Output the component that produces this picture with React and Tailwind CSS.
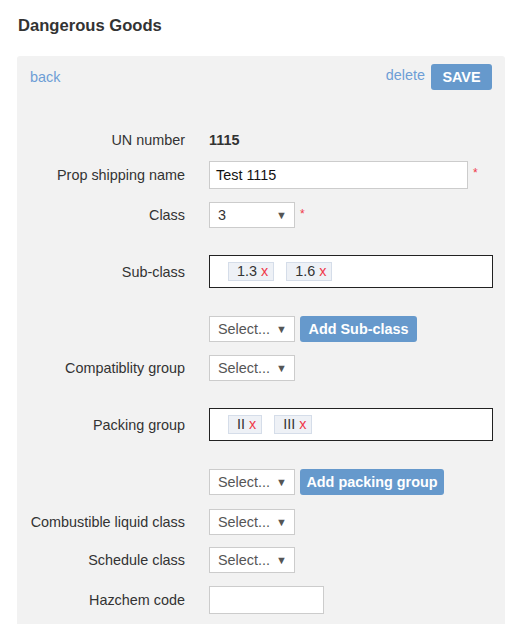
import React from "react";

const font = { fontFamily: '"Liberation Sans", Arial, sans-serif' };

function Label({ children }) {
  return (
    <div className="w-[168px] shrink-0 pt-[2px] text-right text-[14.4px] text-[#333]">{children}</div>
  );
}

function Select({ value, placeholder }) {
  return (
    <div className="flex h-[26px] w-[86px] items-center justify-between border border-[#ccc] bg-white pl-[8px] pr-[7px] pt-[1px] text-[14.4px]">
      <span className={value ? "text-[#333]" : "text-[#555]"}>{value || placeholder}</span>
      <span className="text-[11px] text-[#555]">▼</span>
    </div>
  );
}

function Tag({ text }) {
  return (
    <span className="flex h-[19px] items-center border border-[#d5dde9] bg-[#eef1f6] pl-[8px] pr-[5px] text-[14.4px] leading-none text-[#333]">
      {text}
      <span className="ml-[4px] text-[#f0384a]">x</span>
    </span>
  );
}

function TagBox({ tags }) {
  return (
    <div className="flex h-[33px] w-[284px] items-center gap-[12px] border border-[#222] bg-white pl-[18px]">
      {tags.map((t) => (
        <Tag key={t} text={t} />
      ))}
    </div>
  );
}

function Star() {
  return <span className="ml-[5px] self-start mt-[6px] text-[12px] leading-none text-[#f0384a]">*</span>;
}

function Button({ children, w }) {
  return (
    <button className={`flex h-[26px] items-center justify-center rounded-[3px] bg-[#6699cc] pt-[1px] text-[14.4px] font-bold text-white ${w}`}>
      {children}
    </button>
  );
}

function Row({ label, mt, h, children }) {
  return (
    <div className={`flex items-center ${mt} ${h}`}>
      <Label>{label}</Label>
      <div className="ml-[24px] flex h-full items-center">{children}</div>
    </div>
  );
}

export default function App() {
  return (
    <div className="min-h-[624px] bg-white" style={font}>
      <div className="h-[56px] px-[18px] pt-[16px] text-[16.6px] font-bold leading-[20px] text-[#333]">Dangerous Goods</div>
      <div className="ml-[17px] w-[488px] min-h-[568px] rounded-t-[3px] bg-[#f2f2f2] pb-[10px]">
        <div className="flex items-center justify-between pl-[13px] pr-[13px] pt-[8px]">
          <a className="pt-[1px] text-[14.4px] text-[#6d9ed6]">back</a>
          <div className="flex items-center">
            <a className="mr-[6px] -mt-[3px] text-[14.4px] text-[#6d9ed6]">delete</a>
            <Button w="w-[61px]">SAVE</Button>
          </div>
        </div>

        <Row label="UN number" mt="mt-[37px]" h="h-[26px]">
          <span className="pt-[2px] text-[14.4px] font-bold text-[#333]">1115</span>
        </Row>
        <Row label="Prop shipping name" mt="mt-[8px]" h="h-[28px]">
          <div className="flex h-[28px] w-[259px] items-center border border-[#ccc] bg-white px-[6px] pt-[1px] text-[14.4px] text-[#111]">
            Test 1115
          </div>
          <Star />
        </Row>
        <Row label="Class" mt="mt-[13px]" h="h-[26px]">
          <Select value="3" />
          <Star />
        </Row>
        <Row label="Sub-class" mt="mt-[27px]" h="h-[33px]">
          <TagBox tags={["1.3", "1.6"]} />
        </Row>
        <Row label="" mt="mt-[28px]" h="h-[26px]">
          <Select placeholder="Select..." />
          <div className="ml-[5px]">
            <Button w="w-[117px]">Add Sub-class</Button>
          </div>
        </Row>
        <Row label="Compatiblity group" mt="mt-[13px]" h="h-[26px]">
          <Select placeholder="Select..." />
        </Row>
        <Row label="Packing group" mt="mt-[27px]" h="h-[33px]">
          <TagBox tags={["II", "III"]} />
        </Row>
        <Row label="" mt="mt-[28px]" h="h-[26px]">
          <Select placeholder="Select..." />
          <div className="ml-[5px]">
            <Button w="w-[144px]">Add packing group</Button>
          </div>
        </Row>
        <Row label="Combustible liquid class" mt="mt-[14px]" h="h-[26px]">
          <Select placeholder="Select..." />
        </Row>
        <Row label="Schedule class" mt="mt-[12px]" h="h-[26px]">
          <Select placeholder="Select..." />
        </Row>
        <Row label="Hazchem code" mt="mt-[13px]" h="h-[28px]">
          <div className="h-[28px] w-[115px] border border-[#ccc] bg-white" />
        </Row>
      </div>
    </div>
  );
}
